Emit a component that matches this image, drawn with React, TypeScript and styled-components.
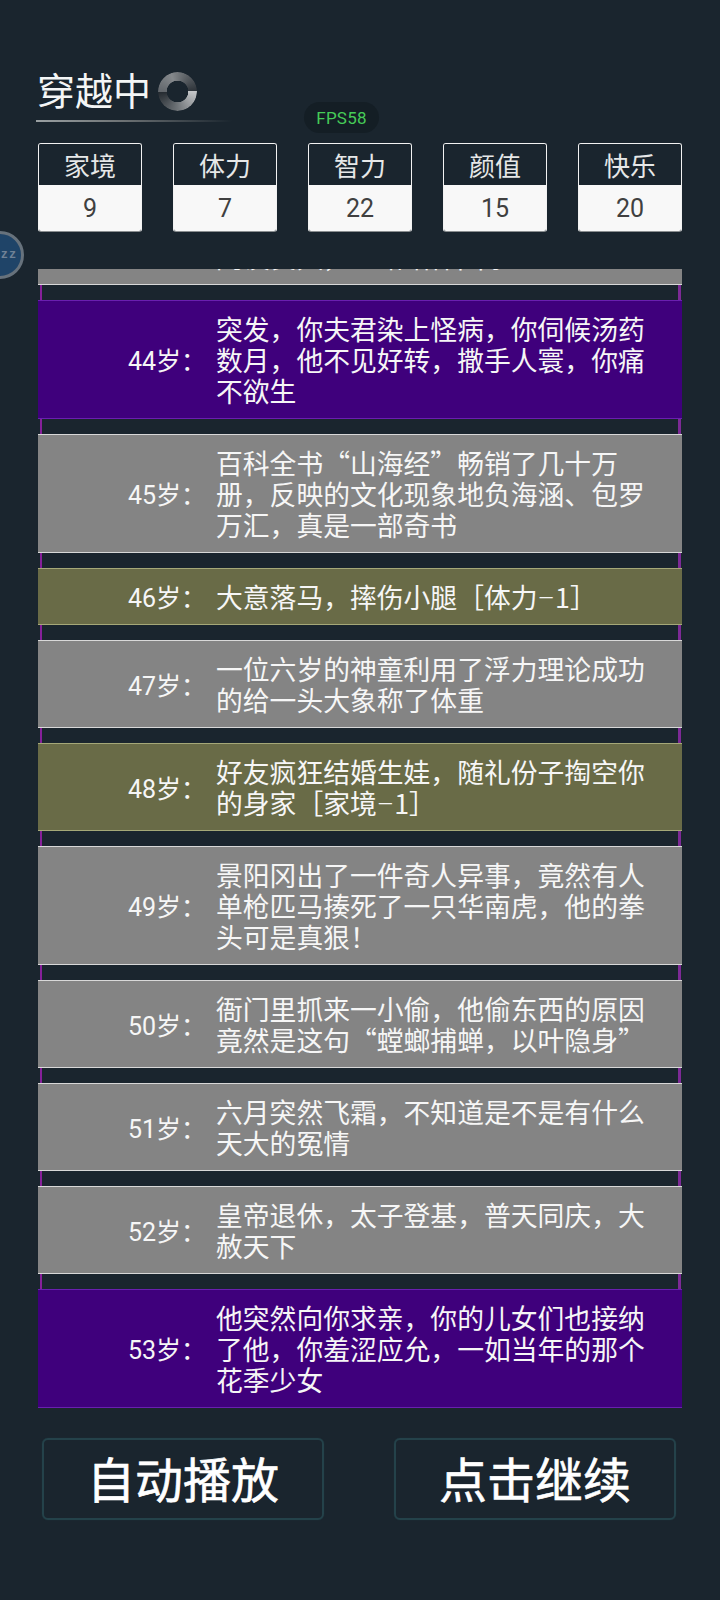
import React from 'react';
import styled, { createGlobalStyle } from 'styled-components';

const GlobalStyle = createGlobalStyle`
  html, body {
    margin: 0;
    padding: 0;
    background: #1a252e;
  }
  * {
    box-sizing: border-box;
  }
`;

const cjk = `"Noto Sans CJK SC", sans-serif`;

const Page = styled.div`
  position: relative;
  width: 720px;
  height: 1600px;
  overflow: hidden;
  display: flex;
  flex-direction: column;
  padding: 67px 38px 0;
  background: #1a252e;
  font-family: ${cjk};
  color: #fff;
`;

const TitleRow = styled.div`
  display: flex;
  align-items: center;
  gap: 7px;
  height: 44px;
`;

const Title = styled.h1`
  margin: 0 0 0 -1px;
  font-size: 38px;
  font-weight: 400;
  line-height: 44px;
  color: #f4f6f6;
`;

const Spinner = styled.div`
  width: 39px;
  height: 39px;
  margin-top: 4px;
  border-radius: 50%;
  background: conic-gradient(
    from 90deg,
    #c4c6c8 0deg,
    #6f7478 90deg,
    #23292f 180deg,
    #62676c 180deg,
    #85898c 250deg,
    #2c3238 360deg
  );
  -webkit-mask: radial-gradient(circle, transparent 10.5px, #000 11px);
  mask: radial-gradient(circle, transparent 10.5px, #000 11px);
`;

const TitleLine = styled.div`
  width: 196px;
  height: 2px;
  margin: 9px 0 0 -2px;
  background: linear-gradient(90deg, #9aa0a2, #6c7173 45%, rgba(100, 105, 108, 0));
`;

const Fps = styled.div`
  position: absolute;
  left: 304px;
  top: 102px;
  width: 75px;
  height: 31px;
  display: flex;
  align-items: center;
  justify-content: center;
  border-radius: 16px;
  background: #141e25;
  color: #46cc58;
  font-family: Roboto, sans-serif;
  font-size: 17px;
  letter-spacing: 0.2px;
`;

const Stats = styled.div`
  display: flex;
  justify-content: space-between;
  margin-top: 21px;
`;

const StatCard = styled.div`
  width: 104px;
  height: 89px;
  display: flex;
  flex-direction: column;
  border: 1px solid #f2f2f2;
  border-bottom-color: #8a8e90;
  border-radius: 3px;
  overflow: hidden;
`;

const StatName = styled.div`
  height: 41px;
  display: flex;
  align-items: center;
  justify-content: center;
  background: #1a252e;
  font-size: 26px;
  color: #e6e8e8;
`;

const StatValue = styled.div`
  flex: 1;
  display: flex;
  align-items: center;
  justify-content: center;
  background: #f8f8f8;
  color: #404040;
  font-family: Roboto, sans-serif;
  font-size: 25px;
`;

const Badge = styled.div`
  position: absolute;
  left: -24px;
  top: 231px;
  width: 48px;
  height: 48px;
  display: flex;
  align-items: center;
  justify-content: center;
  padding-left: 18px;
  border-radius: 50%;
  border: 3px solid #67727c;
  background: #1f4468;
  color: #6f8196;
  font-family: 'Liberation Mono', monospace;
  font-size: 12px;
  font-weight: 700;
  letter-spacing: 1px;
`;

const List = styled.div`
  height: 1139px;
  margin-top: 37px;
  display: flex;
  flex-direction: column;
  justify-content: flex-end;
  overflow: hidden;
  flex-shrink: 0;
`;

const tones = {
  grey: { bg: '#848484', edge: '#d8d8d8' },
  purple: { bg: '#3f007c', edge: '#6a1fb0' },
  olive: { bg: '#696b47', edge: '#a5a878' },
};

type Tone = keyof typeof tones;

const Row = styled.div<{ $tone: Tone }>`
  flex-shrink: 0;
  display: flex;
  align-items: center;
  padding: 12px 0;
  border-top: 1px solid ${(p) => tones[p.$tone].edge};
  border-bottom: 1px solid ${(p) => tones[p.$tone].edge};
  background: ${(p) => tones[p.$tone].bg};
`;

const Age = styled.div`
  width: 178px;
  height: 31px;
  padding: 2px 0 0 90px;
  flex-shrink: 0;
  font-family: Roboto, ${cjk};
  font-size: 25px;
  line-height: 31px;
  white-space: nowrap;
  color: #f6f6f6;
`;

const Lines = styled.div`
  font-size: 26.8px;
  line-height: 31px;
  white-space: nowrap;
  color: #f6f6f6;
`;

const Line = styled.div`
  height: 31px;
`;

const Dash = styled.span`
  font-family: Roboto, sans-serif;
  font-weight: 300;
`;

const Gap = styled.div`
  flex-shrink: 0;
  height: 15px;
  margin: 0 1px 0 2px;
  border-left: 2px solid #86209a;
  border-right: 3px solid #7d2a96;
`;

const Buttons = styled.div`
  display: flex;
  justify-content: space-between;
  margin: 30px 6px 0 4px;
`;

const Action = styled.button`
  width: 282px;
  height: 82px;
  padding: 0 0 4px;
  background: transparent;
  border: 2px solid #24424a;
  border-radius: 6px;
  box-shadow: 0 0 1px #24424a;
  color: #fff;
  font-family: ${cjk};
  font-size: 48px;
  line-height: 1;
  -webkit-text-stroke: 0.6px #fff;
`;

const stats = [
  { name: '家境', value: 9 },
  { name: '体力', value: 7 },
  { name: '智力', value: 22 },
  { name: '颜值', value: 15 },
  { name: '快乐', value: 20 },
];

const events: { age: number; tone: Tone; lines: string[] }[] = [
  { age: 43, tone: 'grey', lines: ['你在集市上偶遇一位故人', '闲谈良久，一路结伴回家'] },
  { age: 44, tone: 'purple', lines: ['突发，你夫君染上怪病，你伺候汤药', '数月，他不见好转，撒手人寰，你痛', '不欲生'] },
  { age: 45, tone: 'grey', lines: ['百科全书“山海经”畅销了几十万', '册，反映的文化现象地负海涵、包罗', '万汇，真是一部奇书'] },
  { age: 46, tone: 'olive', lines: ['大意落马，摔伤小腿［体力–1］'] },
  { age: 47, tone: 'grey', lines: ['一位六岁的神童利用了浮力理论成功', '的给一头大象称了体重'] },
  { age: 48, tone: 'olive', lines: ['好友疯狂结婚生娃，随礼份子掏空你', '的身家［家境–1］'] },
  { age: 49, tone: 'grey', lines: ['景阳冈出了一件奇人异事，竟然有人', '单枪匹马揍死了一只华南虎，他的拳', '头可是真狠！'] },
  { age: 50, tone: 'grey', lines: ['衙门里抓来一小偷，他偷东西的原因', '竟然是这句“螳螂捕蝉，以叶隐身”'] },
  { age: 51, tone: 'grey', lines: ['六月突然飞霜，不知道是不是有什么', '天大的冤情'] },
  { age: 52, tone: 'grey', lines: ['皇帝退休，太子登基，普天同庆，大', '赦天下'] },
  { age: 53, tone: 'purple', lines: ['他突然向你求亲，你的儿女们也接纳', '了他，你羞涩应允，一如当年的那个', '花季少女'] },
];

// the stat change dash is wider than the CJK font's own
function renderLine(text: string) {
  const [before, after] = text.split('–');
  if (after === undefined) return text;
  return (
    <>
      {before}
      <Dash>–</Dash>
      {after}
    </>
  );
}

function App() {
  return (
    <Page>
      <GlobalStyle />
      <TitleRow>
        <Title>穿越中</Title>
        <Spinner />
      </TitleRow>
      <TitleLine />
      <Fps>FPS58</Fps>
      <Badge>zz</Badge>
      <Stats>
        {stats.map((s) => (
          <StatCard key={s.name}>
            <StatName>{s.name}</StatName>
            <StatValue>{s.value}</StatValue>
          </StatCard>
        ))}
      </Stats>
      <List>
        {events.map((e, i) => (
          <React.Fragment key={e.age}>
            {i > 0 && <Gap />}
            <Row $tone={e.tone}>
              <Age>{e.age}岁：</Age>
              <Lines>
                {e.lines.map((l) => (
                  <Line key={l}>{renderLine(l)}</Line>
                ))}
              </Lines>
            </Row>
          </React.Fragment>
        ))}
      </List>
      <Buttons>
        <Action>自动播放</Action>
        <Action>点击继续</Action>
      </Buttons>
    </Page>
  );
}

export default App;
